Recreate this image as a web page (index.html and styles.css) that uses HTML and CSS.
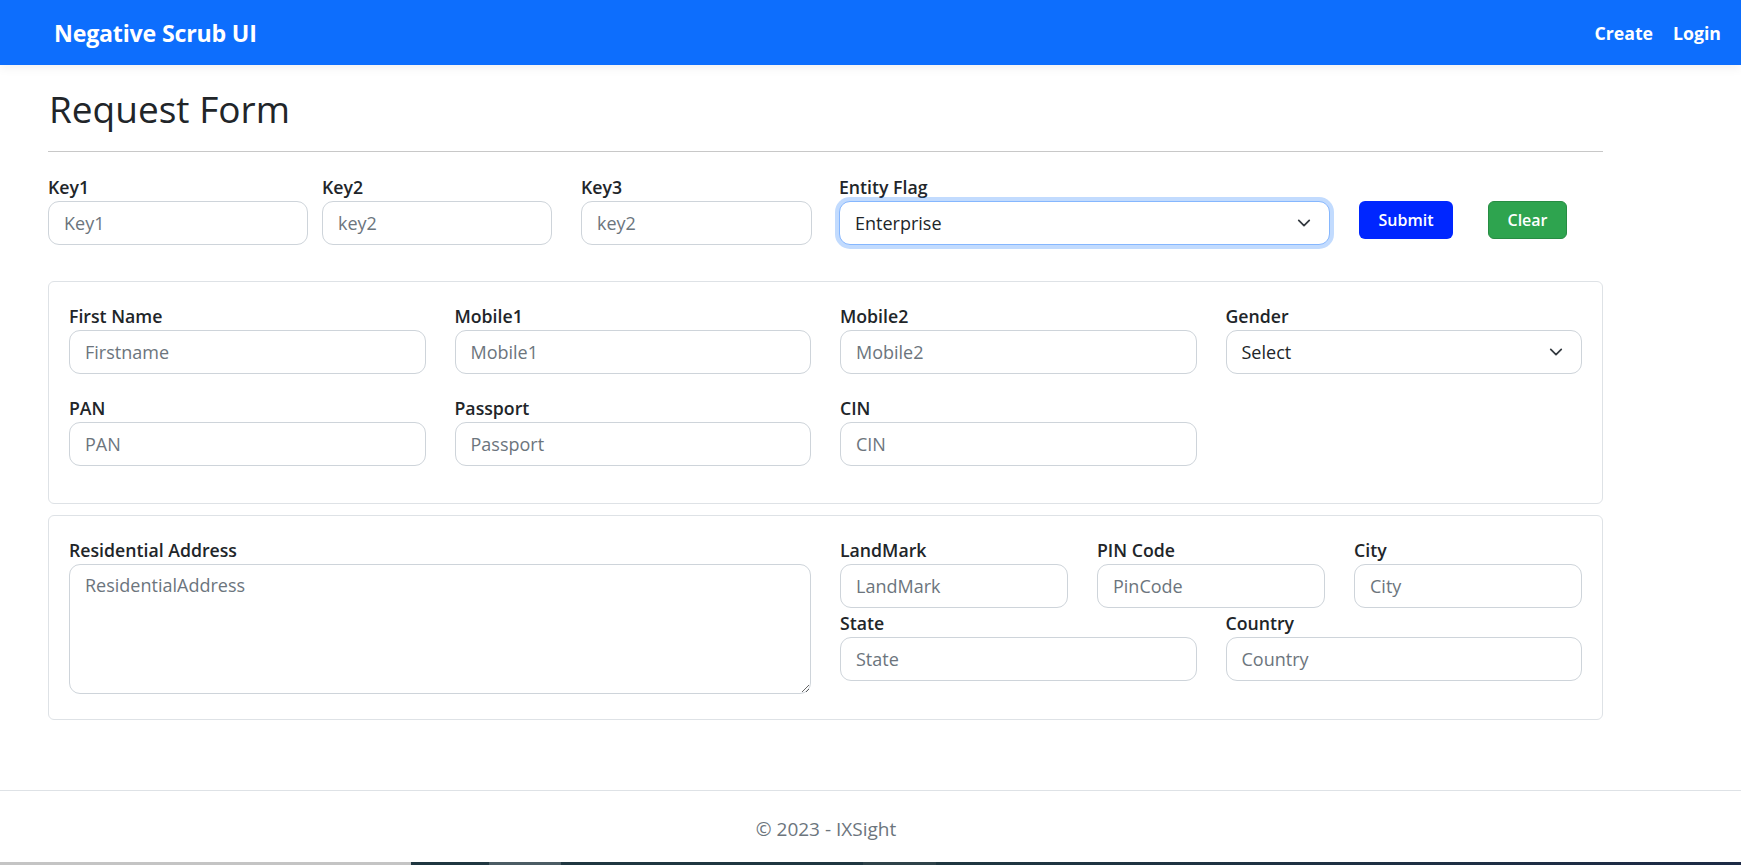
FILE: index.html
```html
<!DOCTYPE html>
<html lang="en">
<head>
<meta charset="utf-8">
<title>Request Form - Negative Scrub UI</title>
<link rel="stylesheet" href="styles.css">
</head>
<body>
<header class="navbar">
  <a class="brand" href="#">Negative Scrub UI</a>
  <nav class="nav-links">
    <a href="#">Create</a>
    <a href="#">Login</a>
  </nav>
</header>

<main class="container">
  <h1 class="title">Request Form</h1>
  <hr class="rule">

  <form class="form">
    <div class="top-row">
      <div class="field f-key1"><label>Key1</label><input type="text" placeholder="Key1"></div>
      <div class="field f-key2"><label>Key2</label><input type="text" placeholder="key2"></div>
      <div class="field f-key3"><label>Key3</label><input type="text" placeholder="key2"></div>
      <div class="field f-entity"><label>Entity Flag</label>
        <div class="select-wrap focused">
          <select><option>Enterprise</option></select>
          <svg class="chev" viewBox="0 0 16 16" width="14" height="14"><path d="M2 5l6 6 6-6" fill="none" stroke="#343a40" stroke-width="2" stroke-linecap="round" stroke-linejoin="round"/></svg>
        </div>
      </div>
      <button type="button" class="btn btn-submit">Submit</button>
      <button type="button" class="btn btn-clear">Clear</button>
    </div>

    <section class="card">
      <div class="grid4">
        <div class="field"><label>First Name</label><input type="text" placeholder="Firstname"></div>
        <div class="field"><label>Mobile1</label><input type="text" placeholder="Mobile1"></div>
        <div class="field"><label>Mobile2</label><input type="text" placeholder="Mobile2"></div>
        <div class="field"><label>Gender</label>
          <div class="select-wrap">
            <select><option>Select</option></select>
            <svg class="chev" viewBox="0 0 16 16" width="14" height="14"><path d="M2 5l6 6 6-6" fill="none" stroke="#343a40" stroke-width="2" stroke-linecap="round" stroke-linejoin="round"/></svg>
          </div>
        </div>
        <div class="field"><label>PAN</label><input type="text" placeholder="PAN"></div>
        <div class="field"><label>Passport</label><input type="text" placeholder="Passport"></div>
        <div class="field"><label>CIN</label><input type="text" placeholder="CIN"></div>
      </div>
    </section>

    <section class="card card-address">
      <div class="grid4">
        <div class="field span2"><label>Residential Address</label><textarea placeholder="ResidentialAddress"></textarea></div>
        <div class="span2 address-right">
          <div class="grid3">
            <div class="field"><label>LandMark</label><input type="text" placeholder="LandMark"></div>
            <div class="field"><label>PIN Code</label><input type="text" placeholder="PinCode"></div>
            <div class="field"><label>City</label><input type="text" placeholder="City"></div>
          </div>
          <div class="grid2">
            <div class="field"><label>State</label><input type="text" placeholder="State"></div>
            <div class="field"><label>Country</label><input type="text" placeholder="Country"></div>
          </div>
        </div>
      </div>
    </section>
  </form>
</main>

<footer class="footer">
  <div class="footer-text">&copy; 2023 - IXSight</div>
</footer>

<div class="taskbar">
  <span class="tb-light"></span>
  <span class="tb-dark w1"></span>
  <span class="tb-mid w2"></span>
  <span class="tb-dark w3"></span>
  <span class="tb-mid2 w4"></span>
  <span class="tb-end"></span>
</div>
</body>
</html>
```

FILE: styles.css
```css
html, body {
  margin: 0;
  padding: 0;
}

body {
  font-family: "Open Sans", "Noto Sans", sans-serif;
  color: #212529;
  background: #fff;
  min-height: 865px;
}

/* ---------- navbar ---------- */
.navbar {
  height: 65px;
  background: #0d6efd;
  display: flex;
  align-items: center;
  justify-content: space-between;
  padding: 0 20px 0 54px;
  box-shadow: 0 3px 10px rgba(0, 0, 0, 0.06);
  position: relative;
}

.brand {
  color: #fff;
  font-weight: 700;
  font-size: 23.2px;
  text-decoration: none;
  letter-spacing: -0.2px;
}

.nav-links {
  display: flex;
  gap: 20px;
}

.nav-links a {
  color: #fff;
  font-weight: 700;
  font-size: 17.7px;
  text-decoration: none;
}

/* ---------- main ---------- */
.container {
  margin-left: 48px;
  width: 1555px;
}

.title {
  font-size: 37px;
  font-weight: 500;
  line-height: 1.2;
  margin: 22px 0 0 1px;
}

.rule {
  margin: 20px 0 0;
  border: 0;
  border-top: 1px solid #c8c8c8;
  height: 0;
}

.field label {
  display: block;
  font-size: 17.7px;
  font-weight: 600;
  line-height: 22px;
  margin-bottom: 3px;
  color: #212529;
}

.field input,
.field select,
.field textarea {
  display: block;
  width: 100%;
  box-sizing: border-box;
  height: 44px;
  border: 1px solid #ced4da;
  border-radius: 11px;
  padding: 0 15px;
  font-family: "Open Sans", "Noto Sans", sans-serif;
  font-size: 18px;
  color: #212529;
  background: #fff;
  outline: none;
  margin: 0;
}

.field input::placeholder,
.field textarea::placeholder {
  color: #6c757d;
  opacity: 1;
}

.field select {
  appearance: none;
  -webkit-appearance: none;
  padding-right: 40px;
}

.select-wrap {
  position: relative;
}

.select-wrap .chev {
  position: absolute;
  right: 19px;
  top: 15px;
  pointer-events: none;
}

.select-wrap.focused select {
  border-color: #86b7fe;
  box-shadow: 0 0 0 4px rgba(13, 110, 253, 0.25);
}

.field textarea {
  height: 130px;
  padding: 7px 15px;
  resize: vertical;
  line-height: 1.5;
}

/* ---------- top row ---------- */
.top-row {
  display: flex;
  align-items: flex-start;
  margin-top: 24px;
}

.f-key1 { width: 260px; }
.f-key2 { width: 230px; margin-left: 14px; }
.f-key3 { width: 231px; margin-left: 29px; }
.f-entity { width: 491px; margin-left: 27px; }

.btn {
  margin-top: 25px;
  height: 38px;
  border: 0;
  border-radius: 6px;
  color: #fff;
  font-family: "Open Sans", "Noto Sans", sans-serif;
  font-size: 16px;
  font-weight: 600;
  padding: 0;
  cursor: pointer;
}

.btn-submit {
  width: 94px;
  margin-left: 29px;
  background: #0026ff;
}

.btn-clear {
  width: 79px;
  margin-left: 35px;
  background: #2ea44f;
  border: 1px solid #278c43;
}

/* ---------- cards ---------- */
.card {
  border: 1px solid #dee2e6;
  border-radius: 6px;
  padding: 23px 20px 37px;
  margin-top: 36px;
}

.card-address {
  margin-top: 11px;
  padding-bottom: 25px;
}

.grid4 {
  display: grid;
  grid-template-columns: repeat(4, 1fr);
  column-gap: 29px;
  row-gap: 23px;
}

.span2 {
  grid-column: span 2;
}

.grid3 {
  display: grid;
  grid-template-columns: repeat(3, 1fr);
  column-gap: 29px;
}

.grid2 {
  display: grid;
  grid-template-columns: repeat(2, 1fr);
  column-gap: 29px;
  margin-top: 4px;
}

/* ---------- footer ---------- */
.footer {
  margin-top: 70px;
  border-top: 1px solid #dee2e6;
}

.footer-text {
  width: 1652px;
  text-align: center;
  padding-top: 25px;
  font-size: 19px;
  line-height: 26px;
  color: #6c757d;
}

/* ---------- bottom strip ---------- */
.taskbar {
  position: fixed;
  left: 0;
  right: 0;
  bottom: 0;
  height: 3px;
  display: flex;
}

.taskbar span { display: block; height: 100%; }
.tb-light { width: 411px; background: #c4c4c4; }
.tb-dark { background: #1f3640; }
.tb-mid { background: #4b5c64; }
.tb-mid2 { background: #2f4249; }
.w1 { width: 78px; }
.w2 { width: 72px; }
.w3 { width: 302px; }
.w4 { width: 73px; }
.tb-end { flex: 1; background: linear-gradient(90deg, #1f3640, #1d2a45); }
```
